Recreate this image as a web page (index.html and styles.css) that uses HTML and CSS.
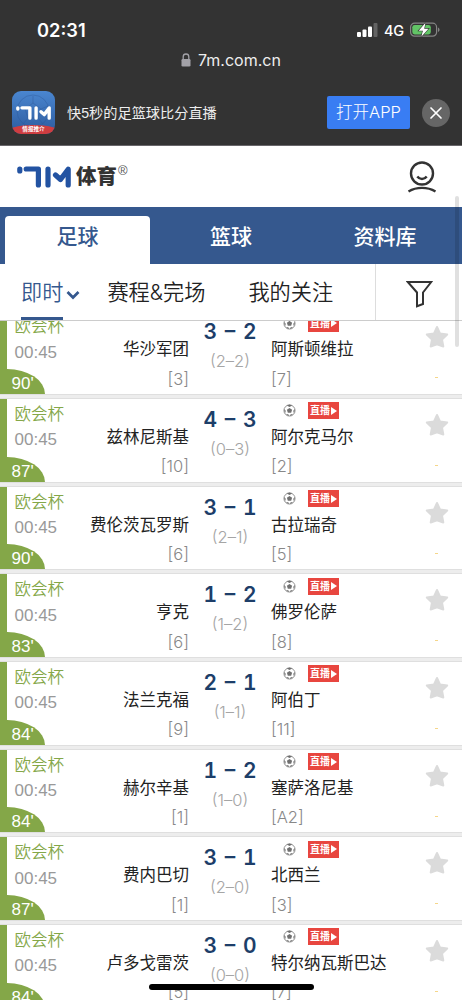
FILE: index.html
```html
<!DOCTYPE html>
<html lang="zh-CN">
<head>
    <meta charset="UTF-8">
    <meta name="viewport" content="width=device-width, initial-scale=1.0">
    <title>7M体育</title>
    <link rel="stylesheet" href="styles.css">
</head>
<body>
    <svg class="sprite">
        <symbol id="ball" viewBox="0 0 14 14">
            <circle cx="7" cy="7" r="6" fill="#fff" stroke="#8a8a8a" stroke-width="1"/>
            <path d="M7 4.200l2.800 2-1 3.100H5.200l-1-3.100zM4 1.500L7 3.200l3-1.700-3-1zM1 5.500l2 1.700-.8 3zM13 5.500l-2 1.700.8 3zM3.200 11.500l2.300-.6 1.200 2zM10.800 11.500l-2.300-.6-1.200 2z" fill="#707070"/>
        </symbol>
        <symbol id="star" viewBox="0 0 24 24">
            <path d="M12 2l3 6.500 7.200 1-5.200 5 1.300 7-6.300-2.300-6.300 2.300 1.300-7-5.200-5 7.200-1z" fill="#dbdbdb" stroke="#dbdbdb" stroke-width="2" stroke-linejoin="round"/>
        </symbol>
        <symbol id="logo" viewBox="0 0 54 22">
            <path d="M2.800 3v2M9.200 3h12.200v16M31 3v16M38.500 9l5 4.500 7.700-10.300v15.800" fill="none" stroke="currentColor" stroke-width="5.200" stroke-linecap="round" stroke-linejoin="round"/>
        </symbol>
    </svg>

    <div class="page">
        <header class="browser">
            <div class="status">
                <span class="clock">02:31</span>
                <div class="status-icons">
                    <svg width="21" height="14" viewBox="0 0 21 14">
                        <rect x="0" y="9" width="4" height="5" rx="1" fill="#fff"/>
                        <rect x="5.500" y="6.500" width="4" height="7.500" rx="1" fill="#fff"/>
                        <rect x="11" y="3.500" width="4" height="10.500" rx="1" fill="#fff"/>
                        <rect x="16.500" y="0" width="4" height="14" rx="1" fill="#636363"/>
                    </svg>
                    <span class="network">4G</span>
                    <svg width="30" height="16" viewBox="0 0 30 16">
                        <rect x=".6" y="1.200" width="26" height="13" rx="4" fill="none" stroke="#858585" stroke-width="1.200"/>
                        <rect x="2.300" y="2.900" width="18.500" height="9.600" rx="2.400" fill="#62c466"/>
                        <path d="M28 5.500c2 .8 2 3.700 0 4.500z" fill="#858585"/>
                        <path d="M15.500.8L8.700 8.700h4.200l-1.600 6 7.200-8h-4.300z" fill="#fff" stroke="#333" stroke-width="1.200" paint-order="stroke"/>
                    </svg>
                </div>
            </div>
            <div class="address">
                <svg width="10" height="14" viewBox="0 0 10 14">
                    <path d="M2.200 7V3.800a2.800 2.800 0 0 1 5.600 0V7" fill="none" stroke="#a3a2a8" stroke-width="1.300"/>
                    <rect x=".5" y="6" width="9" height="7.500" rx="1.300" fill="#a3a2a8"/>
                </svg>
                <span>7m.com.cn</span>
            </div>
            <div class="banner">
                <div class="app-icon">
                    <svg class="app-ball" viewBox="0 0 43 43">
                        <circle cx="21" cy="20" r="16"/>
                        <path d="M21 12l8 6-3 9H16l-3-9zM21 12V5M29 18l7-3M26 27l5 6M16 27l-5 6M13 18l-7-3"/>
                    </svg>
                    <svg class="app-logo"><use href="#logo"/></svg>
                    <span class="app-label">情报推介</span>
                </div>
                <p class="banner-text">快5秒的足篮球比分直播</p>
                <a class="open-app">打开APP</a>
                <svg class="close" width="28" height="28" viewBox="0 0 28 28">
                    <circle cx="14" cy="14" r="14" fill="#666"/>
                    <path d="M9 9l10 10M19 9L9 19" stroke="#fff" stroke-width="1.700" stroke-linecap="round"/>
                </svg>
            </div>
        </header>

        <div class="topbar">
            <div class="brand">
                <svg class="brand-logo"><use href="#logo"/></svg>
                <span class="brand-name">体育</span>
                <span class="brand-mark">®</span>
            </div>
            <svg class="user" width="30" height="32" viewBox="0 0 30 32" fill="none" stroke="#333" stroke-width="2.400">
                <circle cx="15" cy="12.500" r="11"/>
                <path d="M10.300 15.500c2.400 3.300 7 3.300 9.400 0"/>
                <path d="M1.500 30.500c8-4.800 19-4.800 27 0"/>
            </svg>
        </div>

        <nav class="tabs">
            <a class="tab active">足球</a>
            <a class="tab">篮球</a>
            <a class="tab">资料库</a>
        </nav>

        <div class="subnav">
            <a class="sub current">即时</a>
            <svg class="chevron" width="14" height="10" viewBox="0 0 14 10"><path d="M1.500 2L7 7.500 12.500 2" fill="none" stroke="#35588e" stroke-width="2.700"/></svg>
            <a class="sub schedule">赛程&amp;完场</a>
            <a class="sub">我的关注</a>
            <div class="filter">
                <svg width="27" height="28" viewBox="0 0 27 28"><path d="M1.800 2h23.400l-8.200 10.500v11.500l-6 2.300V12.500z" fill="none" stroke="#333" stroke-width="2"/></svg>
            </div>
        </div>

        <main class="list">
            <div class="match">
                <div class="info"><span class="league">欧会杯</span><span class="time">00:45</span><span class="minute">90'</span></div>
                <div class="team home"><span class="name">华沙军团</span><span class="rank">[3]</span></div>
                <div class="result"><span class="score">3 – 2</span><span class="half">(2–2)</span></div>
                <div class="team"><div class="tags"><svg class="ball"><use href="#ball"/></svg><span class="live">直播</span></div><span class="name">阿斯顿维拉</span><span class="rank">[7]</span></div>
                <div class="fav"><svg class="star"><use href="#star"/></svg><span class="dash"></span></div>
            </div>
            <div class="match">
                <div class="info"><span class="league">欧会杯</span><span class="time">00:45</span><span class="minute">87'</span></div>
                <div class="team home"><span class="name">兹林尼斯基</span><span class="rank">[10]</span></div>
                <div class="result"><span class="score">4 – 3</span><span class="half">(0–3)</span></div>
                <div class="team"><div class="tags"><svg class="ball"><use href="#ball"/></svg><span class="live">直播</span></div><span class="name">阿尔克马尔</span><span class="rank">[2]</span></div>
                <div class="fav"><svg class="star"><use href="#star"/></svg><span class="dash"></span></div>
            </div>
            <div class="match">
                <div class="info"><span class="league">欧会杯</span><span class="time">00:45</span><span class="minute">90'</span></div>
                <div class="team home"><span class="name">费伦茨瓦罗斯</span><span class="rank">[6]</span></div>
                <div class="result"><span class="score">3 – 1</span><span class="half">(2–1)</span></div>
                <div class="team"><div class="tags"><svg class="ball"><use href="#ball"/></svg><span class="live">直播</span></div><span class="name">古拉瑞奇</span><span class="rank">[5]</span></div>
                <div class="fav"><svg class="star"><use href="#star"/></svg><span class="dash"></span></div>
            </div>
            <div class="match">
                <div class="info"><span class="league">欧会杯</span><span class="time">00:45</span><span class="minute">83'</span></div>
                <div class="team home"><span class="name">亨克</span><span class="rank">[6]</span></div>
                <div class="result"><span class="score">1 – 2</span><span class="half">(1–2)</span></div>
                <div class="team"><div class="tags"><svg class="ball"><use href="#ball"/></svg><span class="live">直播</span></div><span class="name">佛罗伦萨</span><span class="rank">[8]</span></div>
                <div class="fav"><svg class="star"><use href="#star"/></svg><span class="dash"></span></div>
            </div>
            <div class="match">
                <div class="info"><span class="league">欧会杯</span><span class="time">00:45</span><span class="minute">84'</span></div>
                <div class="team home"><span class="name">法兰克福</span><span class="rank">[9]</span></div>
                <div class="result"><span class="score">2 – 1</span><span class="half">(1–1)</span></div>
                <div class="team"><div class="tags"><svg class="ball"><use href="#ball"/></svg><span class="live">直播</span></div><span class="name">阿伯丁</span><span class="rank">[11]</span></div>
                <div class="fav"><svg class="star"><use href="#star"/></svg><span class="dash"></span></div>
            </div>
            <div class="match">
                <div class="info"><span class="league">欧会杯</span><span class="time">00:45</span><span class="minute">84'</span></div>
                <div class="team home"><span class="name">赫尔辛基</span><span class="rank">[1]</span></div>
                <div class="result"><span class="score">1 – 2</span><span class="half">(1–0)</span></div>
                <div class="team"><div class="tags"><svg class="ball"><use href="#ball"/></svg><span class="live">直播</span></div><span class="name">塞萨洛尼基</span><span class="rank">[A2]</span></div>
                <div class="fav"><svg class="star"><use href="#star"/></svg><span class="dash"></span></div>
            </div>
            <div class="match">
                <div class="info"><span class="league">欧会杯</span><span class="time">00:45</span><span class="minute">87'</span></div>
                <div class="team home"><span class="name">费内巴切</span><span class="rank">[1]</span></div>
                <div class="result"><span class="score">3 – 1</span><span class="half">(2–0)</span></div>
                <div class="team"><div class="tags"><svg class="ball"><use href="#ball"/></svg><span class="live">直播</span></div><span class="name">北西兰</span><span class="rank">[3]</span></div>
                <div class="fav"><svg class="star"><use href="#star"/></svg><span class="dash"></span></div>
            </div>
            <div class="match">
                <div class="info"><span class="league">欧会杯</span><span class="time">00:45</span><span class="minute">84'</span></div>
                <div class="team home"><span class="name">卢多戈雷茨</span><span class="rank">[5]</span></div>
                <div class="result"><span class="score">3 – 0</span><span class="half">(0–0)</span></div>
                <div class="team"><div class="tags"><svg class="ball"><use href="#ball"/></svg><span class="live">直播</span></div><span class="name">特尔纳瓦斯巴达</span><span class="rank">[7]</span></div>
                <div class="fav"><svg class="star"><use href="#star"/></svg><span class="dash"></span></div>
            </div>
        </main>

        <div class="scrollbar"></div>
        <div class="home-indicator"></div>
    </div>
</body>
</html>
```

FILE: styles.css
```css
* {
    box-sizing: border-box;
}

body {
    margin: 0;
    background-color: #fff;
    font-family: "Liberation Sans", "Noto Sans CJK SC", sans-serif;
    color: #222;
}

svg {
    display: block;
    flex: none;
}

.sprite {
    position: absolute;
    width: 0;
    height: 0;
}

.page {
    position: relative;
    width: 462px;
    height: 1000px;
    overflow: hidden;
    display: flex;
    flex-direction: column;
}

/* browser chrome */
.browser {
    height: 146px;
    flex: none;
    background-color: #333;
    border-bottom: 1px solid #68666a;
    color: #fff;
}

.status {
    height: 48px;
    padding: 12px 22px 0 37px;
    display: flex;
    justify-content: space-between;
    align-items: center;
    font-family: Inter, sans-serif;
}

.clock {
    font-size: 18.3px;
    font-weight: 600;
    line-height: 36px;
}

.status-icons {
    display: flex;
    align-items: center;
}

.network {
    width: 20px;
    margin: 0 6px;
    font-size: 14.5px;
    font-weight: 500;
    letter-spacing: -0.3px;
}

.address {
    height: 24px;
    display: flex;
    align-items: center;
    justify-content: center;
    gap: 7px;
    font-family: Inter, sans-serif;
    font-size: 16px;
    color: #eee;
}

.banner {
    height: 73px;
    padding: 8px 12px 0;
    display: flex;
    align-items: center;
}

.app-icon {
    position: relative;
    width: 43px;
    height: 43px;
    border-radius: 9px;
    overflow: hidden;
    background: linear-gradient(#4a86d0, #2d5b9e);
}

.app-ball {
    width: 43px;
    height: 43px;
    fill: none;
    stroke: #2c5899;
    stroke-opacity: 0.4;
}

.app-logo {
    position: absolute;
    left: 4px;
    top: 14px;
    width: 35px;
    height: 16px;
    color: #fff;
}

.app-label {
    position: absolute;
    left: -6px;
    top: 34px;
    width: 55px;
    height: 16px;
    border-radius: 50% 50% 0 0;
    background-color: #cf3d40;
    font-size: 5.6px;
    font-weight: 700;
    line-height: 9px;
    text-align: center;
}

.banner-text {
    margin: 0 0 2px 12px;
    flex: 1;
    font-size: 14.2px;
    color: #eee;
}

.open-app {
    width: 83px;
    height: 33px;
    border-radius: 2px;
    background-color: #397df3;
    font-family: Inter, "Noto Sans CJK SC", sans-serif;
    font-size: 16.5px;
    font-weight: 300;
    line-height: 32px;
    text-align: center;
}

.close {
    margin-left: 12px;
}

/* site header */
.topbar {
    height: 61px;
    flex: none;
    padding: 0 25px 0 17px;
    display: flex;
    justify-content: space-between;
    align-items: center;
}

.brand {
    display: flex;
    align-items: center;
}

.brand-logo {
    width: 54px;
    height: 22px;
    color: #2353a2;
}

.brand-name {
    margin-left: 5px;
    font-size: 20.5px;
    font-weight: 900;
    line-height: 22px;
    color: #333;
}

.brand-mark {
    align-self: flex-start;
    margin: -1px 0 0 1px;
    font-size: 13px;
    line-height: 12px;
    color: #555;
}

.tabs {
    height: 57px;
    flex: none;
    padding-left: 5px;
    display: flex;
    align-items: flex-end;
    background-color: #35588e;
}

.tab {
    width: 154px;
    height: 48px;
    font-size: 21px;
    font-weight: 500;
    line-height: 41px;
    text-align: center;
    color: #fff;
}

.tab.active {
    width: 145px;
    margin-right: 4px;
    border-radius: 4px 4px 0 0;
    background-color: #fff;
    color: #35588e;
}

.subnav {
    height: 57px;
    flex: none;
    padding-left: 21px;
    display: flex;
    align-items: center;
    border-bottom: 1px solid #ccc;
}

.sub {
    height: 56px;
    font-family: Inter, "Noto Sans CJK SC", sans-serif;
    font-size: 21.2px;
    font-weight: 350;
    line-height: 57px;
}

.current {
    border-bottom: 3px solid #35588e;
    color: #35588e;
}

.chevron {
    margin: 5px 0 0 3px;
}

.schedule {
    margin: 0 43px 0 27px;
}

.filter {
    width: 87px;
    height: 56px;
    margin-left: auto;
    padding-top: 3px;
    display: flex;
    align-items: center;
    justify-content: center;
    border-left: 1px solid #ddd;
}

/* match list */
.list {
    flex: 1;
    min-height: 0;
    overflow: hidden;
    background-color: #ededed;
}

.match {
    height: 82.67px;
    margin-bottom: 5px;
    display: grid;
    grid-template-columns: 68px 114px 82px 140px 51px;
    background-color: #fff;
    border-left: 7px solid #84a748;
    box-shadow: 0 0 0 1px #dfdfdf;
}

.match:first-child {
    margin-top: -9.7px;
}

.info {
    padding: 3px 0 0 7.5px;
    display: flex;
    flex-direction: column;
}

.league {
    font-size: 16.5px;
    font-weight: 350;
    line-height: 24px;
    color: #84a748;
}

.time {
    margin-top: 2.5px;
    font-size: 17px;
    line-height: 24px;
    color: #999;
}

.minute {
    width: 38px;
    height: 25px;
    margin: auto 0 0 -7.5px;
    padding-left: 4.5px;
    border-radius: 0 38px 0 0 / 0 25px 0 0;
    background-color: #84a748;
    font-size: 17px;
    line-height: 29px;
    color: #fff;
}

.team {
    padding-top: 26px;
    display: flex;
    flex-direction: column;
    white-space: nowrap;
}

.home {
    align-items: flex-end;
}

.name {
    font-size: 16.5px;
    line-height: 24px;
}

.rank {
    margin-top: 5.5px;
    font-family: Inter, sans-serif;
    font-size: 16.5px;
    font-weight: 300;
    line-height: 24px;
    color: #888;
}

.tags {
    height: 17px;
    margin: -22.5px 0 5.5px 12px;
    display: flex;
    align-items: center;
    gap: 12px;
}

.ball {
    width: 13px;
    height: 13px;
}

.live {
    width: 31px;
    height: 17px;
    padding-left: 2px;
    display: flex;
    align-items: center;
    background-color: #e8463f;
    font-size: 10px;
    font-weight: 700;
    line-height: 17px;
    color: #fff;
}

.live::after {
    content: "";
    margin-left: 1px;
    border-left: 6px solid #fff;
    border-top: 4px solid transparent;
    border-bottom: 4px solid transparent;
}

.result {
    padding-top: 8px;
    display: flex;
    flex-direction: column;
    align-items: center;
    white-space: nowrap;
}

.score {
    font-family: Inter, sans-serif;
    font-size: 21px;
    font-weight: 600;
    font-variant-numeric: tabular-nums;
    line-height: 26px;
    word-spacing: 2px;
    color: #1d3e69;
}

.half {
    margin-top: 4px;
    font-family: Inter, sans-serif;
    font-size: 16.5px;
    font-weight: 300;
    line-height: 24px;
    color: #a5a5a5;
}

.fav {
    padding-top: 14px;
    display: flex;
    flex-direction: column;
    align-items: center;
}

.star {
    width: 24px;
    height: 24px;
}

.dash {
    width: 3px;
    height: 1px;
    margin-top: 28px;
    background-color: #f5d68a;
}

.scrollbar {
    position: absolute;
    top: 196px;
    right: 3px;
    width: 4px;
    height: 151px;
    border-radius: 2px;
    background-color: rgba(0, 0, 0, 0.12);
}

.home-indicator {
    position: absolute;
    left: 149px;
    bottom: 10px;
    width: 165px;
    height: 6px;
    border-radius: 3px;
    background-color: #000;
}
```
